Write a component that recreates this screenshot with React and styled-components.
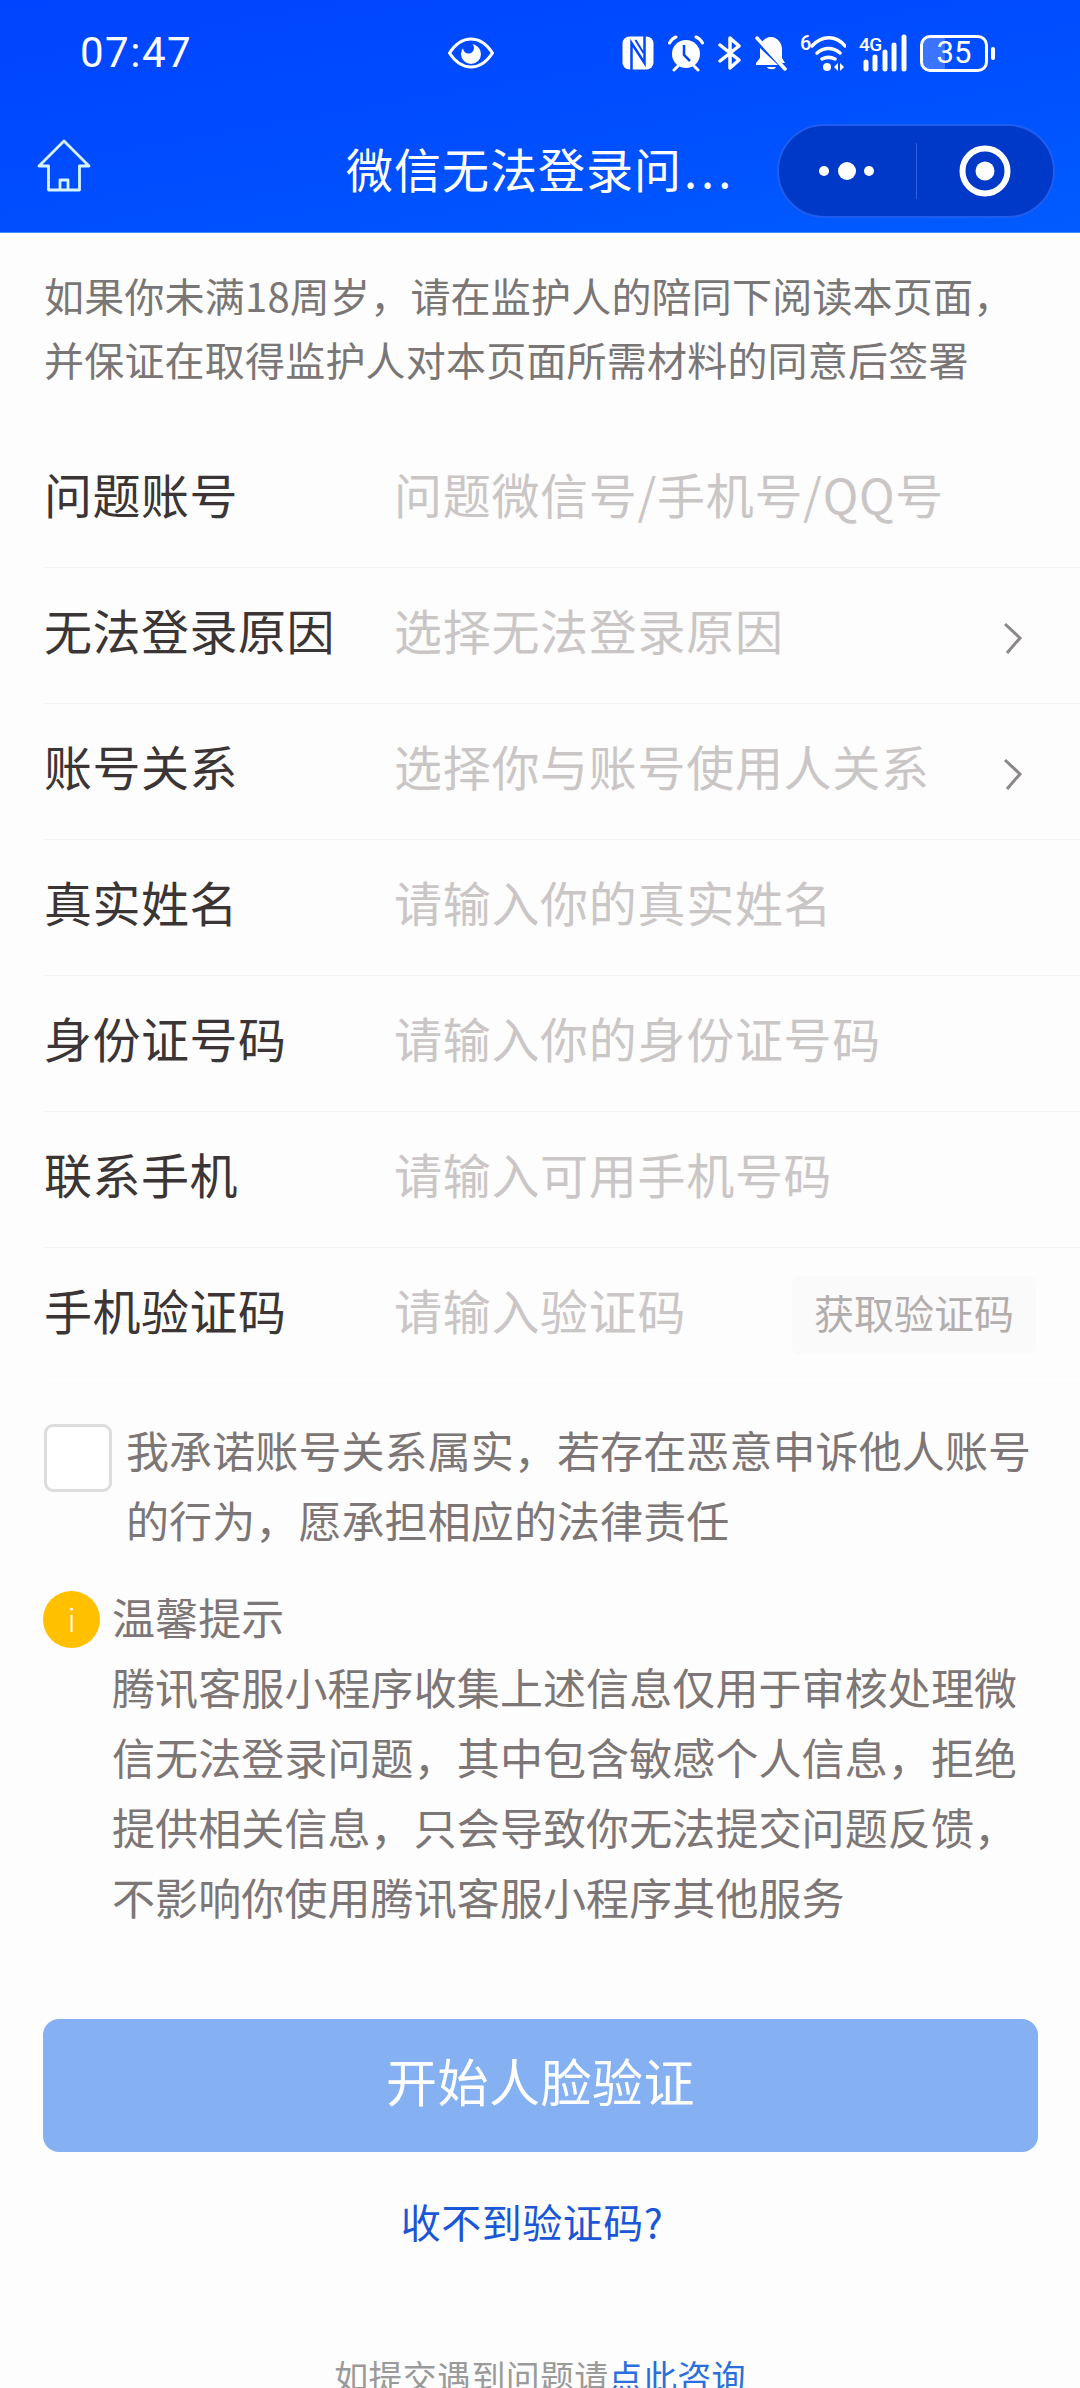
import React from 'react';
import styled, { createGlobalStyle } from 'styled-components';

const GlobalStyle = createGlobalStyle`
  html, body {
    margin: 0;
    padding: 0;
    background: #fdfdfd;
  }
  body {
    font-family: "Noto Sans CJK SC", "Noto Sans", sans-serif;
  }
  * {
    box-sizing: border-box;
  }
`;

const Page = styled.div`
  width: 1080px;
  height: 2388px;
  overflow: hidden;
  background: #fdfdfd;
`;

const Header = styled.header`
  height: 233px;
  background: linear-gradient(170deg, #0044ff 0%, #004dff 50%, #005cff 100%);
  border-bottom: 1px solid #3f8cff;
  color: #fff;
`;

const StatusBar = styled.div`
  height: 100px;
  display: flex;
  align-items: center;
  padding: 6px 92px 0 80px;
`;

const Time = styled.div`
  width: 368px;
  font-family: "Roboto", sans-serif;
  font-size: 42px;
  letter-spacing: 1.5px;
  line-height: 48px;
`;

const StatusIcons = styled.div`
  margin-left: auto;
  display: flex;
  align-items: center;
  gap: 13px;
`;

const Battery = styled.div`
  width: 68px;
  height: 37px;
  border: 3px solid #fff;
  border-radius: 10px;
  background: linear-gradient(90deg, #3a74ff 0 35%, transparent 35%);
  display: flex;
  align-items: center;
  justify-content: center;
  font-family: "Roboto", sans-serif;
  font-size: 31px;
  line-height: 32px;
  position: relative;

  &::after {
    content: '';
    position: absolute;
    right: -10px;
    top: 9px;
    width: 4px;
    height: 13px;
    border-radius: 2px;
    background: #fff;
  }
`;

const NavBar = styled.div`
  height: 132px;
  display: flex;
  align-items: center;
  padding: 0 25px 0 37px;
`;

const Title = styled.div`
  margin-left: 255px;
  margin-top: 3px;
  font-size: 47px;
  letter-spacing: 1px;
  line-height: 60px;
  white-space: nowrap;
`;

const Dots = styled.span`
  letter-spacing: 4px;
  margin-left: 2px;
`;

const Capsule = styled.div`
  margin-left: auto;
  width: 278px;
  height: 94px;
  margin-top: 9px;
  border-radius: 47px;
  background: #0038c8;
  border: 2px solid #1f5dee;
  display: flex;
  align-items: center;
`;

const CapsulePart = styled.div`
  flex: 1;
  height: 56px;
  display: flex;
  align-items: center;
  justify-content: center;

  & + & {
    border-left: 1.5px solid #2a62e6;
  }
`;

const Intro = styled.p`
  margin: 0 0 41px;
  padding: 30px 0 0 44px;
  font-size: 40px;
  letter-spacing: 0.2px;
  line-height: 64px;
  color: #7a7676;
  white-space: nowrap;
`;

const Rows = styled.div`
  margin-left: 44px;
`;

const Row = styled.div`
  height: 136px;
  display: flex;
  align-items: center;
  padding-bottom: 14px;
  border-bottom: 1.5px solid ${({ $last }) => ($last ? '#fafafa' : '#f6f5f5')};
`;

const Label = styled.div`
  width: 350px;
  flex: none;
  font-size: 48px;
  letter-spacing: 0.5px;
  line-height: 60px;
  color: #3b3535;
`;

const Placeholder = styled.div`
  font-size: 48px;
  letter-spacing: 0.7px;
  line-height: 60px;
  color: #cbc6c6;
  white-space: nowrap;
`;

const Chevron = styled.svg`
  width: 22px;
  height: 34px;
  margin-left: auto;
  margin-right: 56px;
  margin-top: 19px;
`;

const CodeButton = styled.div`
  margin-left: auto;
  margin-right: 44px;
  margin-top: 14px;
  width: 244px;
  height: 79px;
  padding-bottom: 8px;
  border-radius: 8px;
  background: #fbfafa;
  display: flex;
  align-items: center;
  justify-content: center;
  font-size: 40px;
  color: #b3aeae;
`;

const Consent = styled.div`
  margin: 30px 44px 0 44px;
  display: flex;
  gap: 14px;
`;

const Checkbox = styled.div`
  width: 68px;
  height: 68px;
  flex: none;
  margin-top: 10px;
  border: 3px solid #dedcdc;
  border-radius: 9px;
  background: #fff;
`;

const BodyText = styled.div`
  font-size: 43px;
  letter-spacing: 0.1px;
  line-height: 70px;
  color: #7d7676;
`;

const Notice = styled.div`
  margin: 27px 44px 0 43px;
  display: flex;
  gap: 12px;
`;

const InfoIcon = styled.svg`
  width: 57px;
  height: 57px;
  flex: none;
  margin-top: 10px;
`;

const NoticeLine = styled.div`
  white-space: nowrap;
`;

const PrimaryButton = styled.div`
  margin: 88px 42px 0 43px;
  height: 133px;
  padding-bottom: 12px;
  border-radius: 16px;
  background: #85b1f3;
  display: flex;
  align-items: center;
  justify-content: center;
  color: #fff;
  font-size: 51px;
  letter-spacing: 0.5px;
`;

const HelpLink = styled.div`
  margin-top: 39px;
  padding-right: 16px;
  text-align: center;
  font-size: 40px;
  letter-spacing: 0.5px;
  line-height: 60px;
  color: #1a56d6;
`;

const Footer = styled.div`
  margin-top: 100px;
  text-align: center;
  font-size: 34px;
  letter-spacing: 0.3px;
  line-height: 50px;
  color: #9a9a9a;
`;

const FooterLink = styled.span`
  color: #2a6fdb;
`;

const EyeIcon = () => (
  <svg width="46" height="32" viewBox="0 0 46 32">
    <path d="M1.500 16C8 6 15 2 23 2s15 4 21.500 14C38 26 31 30 23 30S8 26 1.500 16z" fill="none" stroke="#fff" strokeWidth="3" />
    <circle cx="23" cy="17" r="10" fill="#fff" />
    <circle cx="20.500" cy="11" r="5.500" fill="#0048ff" />
  </svg>
);

const NfcIcon = () => (
  <svg width="32" height="34" viewBox="0 0 32 34">
    <rect x="0.500" y="0.500" width="31" height="33" rx="7" fill="#fff" />
    <path d="M9.500 34V7l13 20V0" fill="none" stroke="#0048ff" strokeWidth="2.500" />
    <path d="M13.500 4l8 13" stroke="#0048ff" strokeWidth="2" />
  </svg>
);

const AlarmIcon = () => (
  <svg width="38" height="38" viewBox="0 0 38 38">
    <circle cx="19" cy="20" r="14" fill="#fff" />
    <path d="M17 11v10l6 6" fill="none" stroke="#0048ff" strokeWidth="2.500" />
    <path d="M2.500 9C4 6 6 4 9 3M35.500 9C34 6 32 4 29 3M7 36l4-4M31 36l-4-4" fill="none" stroke="#fff" strokeWidth="3" strokeLinecap="round" />
  </svg>
);

const BluetoothIcon = () => (
  <svg width="24" height="36" viewBox="0 0 24 36">
    <path d="M2 10l19 15-9 8V3l9 8L2 26" fill="none" stroke="#fff" strokeWidth="3.500" strokeLinecap="round" strokeLinejoin="round" />
  </svg>
);

const BellOffIcon = () => (
  <svg width="32" height="36" viewBox="0 0 32 36">
    <path d="M16 2C12 2 9 4 7 7l20 21h3l-3-5v-9C27 8 22 2 16 2zM5 13v10l-4 5v2h22L5 13z" fill="#fff" />
    <path d="M12 32h9c-1 3-8 3-9 0z" fill="#fff" />
    <path d="M2 3l28 31" stroke="#fff" strokeWidth="3.500" strokeLinecap="round" />
  </svg>
);

const WifiIcon = () => (
  <svg width="46" height="38" viewBox="0 0 46 38">
    <text x="0" y="16" fill="#fff" fontFamily="Roboto, sans-serif" fontSize="20" fontWeight="500">6</text>
    <path d="M12 12c10-11 24-11 33 0M17 19c7-6 16-6 23 0M22 25c4-2 9-2 13 0" fill="none" stroke="#fff" strokeWidth="3.500" strokeLinecap="round" />
    <circle cx="27" cy="33" r="4" fill="#fff" />
    <path d="M34 33l4-4v8zM40 29l4 4-4 4z" fill="#fff" />
  </svg>
);

const SignalIcon = () => (
  <svg width="48" height="38" viewBox="0 0 48 38">
    <text x="0" y="17" fill="#fff" fontFamily="Roboto, sans-serif" fontSize="19" fontWeight="500" letterSpacing="-0.5">4G</text>
    <path d="M7 28v7M16 23v12M26 18v17M35 11v24M45 3v32" stroke="#fff" strokeWidth="5" strokeLinecap="round" />
  </svg>
);

const HomeIcon = () => (
  <svg width="54" height="54" viewBox="0 0 54 54">
    <path d="M27 2L2 27h9.500v24h31V27H52zM23 51v-10h8v10" fill="none" stroke="#d6f4ff" strokeWidth="2.800" strokeLinejoin="round" />
  </svg>
);

const MoreIcon = () => (
  <svg width="56" height="20" viewBox="0 0 56 20">
    <circle cx="5" cy="10" r="5" fill="#fff" />
    <circle cx="28" cy="10" r="9" fill="#fff" />
    <circle cx="50" cy="10" r="5" fill="#fff" />
  </svg>
);

const CloseIcon = () => (
  <svg width="52" height="52" viewBox="0 0 52 52">
    <circle cx="26" cy="26" r="22.500" fill="none" stroke="#fff" strokeWidth="6" />
    <circle cx="26" cy="26" r="9.500" fill="#fff" />
  </svg>
);

const ChevronRight = () => (
  <Chevron viewBox="0 0 22 34">
    <path d="M3 3l15 14L5 32" fill="none" stroke="#8c8787" strokeWidth="3" />
  </Chevron>
);

const rows = [
  { label: '问题账号', hint: '问题微信号/手机号/QQ号' },
  { label: '无法登录原因', hint: '选择无法登录原因', arrow: true },
  { label: '账号关系', hint: '选择你与账号使用人关系', arrow: true },
  { label: '真实姓名', hint: '请输入你的真实姓名' },
  { label: '身份证号码', hint: '请输入你的身份证号码' },
  { label: '联系手机', hint: '请输入可用手机号码' },
  { label: '手机验证码', hint: '请输入验证码', code: true },
];

const noticeLines = [
  '温馨提示',
  '腾讯客服小程序收集上述信息仅用于审核处理微',
  '信无法登录问题，其中包含敏感个人信息，拒绝',
  '提供相关信息，只会导致你无法提交问题反馈，',
  '不影响你使用腾讯客服小程序其他服务',
];

const App = () => (
  <Page>
    <GlobalStyle />
    <Header>
      <StatusBar>
        <Time>07:47</Time>
        <EyeIcon />
        <StatusIcons>
          <NfcIcon />
          <AlarmIcon />
          <BluetoothIcon />
          <BellOffIcon />
          <WifiIcon />
          <SignalIcon />
          <Battery>35</Battery>
        </StatusIcons>
      </StatusBar>
      <NavBar>
        <HomeIcon />
        <Title>微信无法登录问<Dots>...</Dots></Title>
        <Capsule>
          <CapsulePart><MoreIcon /></CapsulePart>
          <CapsulePart><CloseIcon /></CapsulePart>
        </Capsule>
      </NavBar>
    </Header>

    <Intro>
      如果你未满18周岁，请在监护人的陪同下阅读本页面，
      <br />
      并保证在取得监护人对本页面所需材料的同意后签署
    </Intro>

    <Rows>
      {rows.map((row, i) => (
        <Row key={row.label} $last={i === rows.length - 1}>
          <Label>{row.label}</Label>
          <Placeholder>{row.hint}</Placeholder>
          {row.arrow && <ChevronRight />}
          {row.code && <CodeButton>获取验证码</CodeButton>}
        </Row>
      ))}
    </Rows>

    <Consent>
      <Checkbox />
      <BodyText>我承诺账号关系属实，若存在恶意申诉他人账号的行为，愿承担相应的法律责任</BodyText>
    </Consent>

    <Notice>
      <InfoIcon viewBox="0 0 57 57">
        <circle cx="28.500" cy="28.500" r="28.500" fill="#ffc000" />
        <path d="M28.500 24v17" stroke="#fff" strokeWidth="2" />
        <circle cx="28.500" cy="18" r="1.500" fill="#fff" />
      </InfoIcon>
      <BodyText>
        {noticeLines.map((line) => (
          <NoticeLine key={line}>{line}</NoticeLine>
        ))}
      </BodyText>
    </Notice>

    <PrimaryButton>开始人脸验证</PrimaryButton>
    <HelpLink>收不到验证码?</HelpLink>
    <Footer>如提交遇到问题请<FooterLink>点此咨询</FooterLink></Footer>
  </Page>
);

export default App;
